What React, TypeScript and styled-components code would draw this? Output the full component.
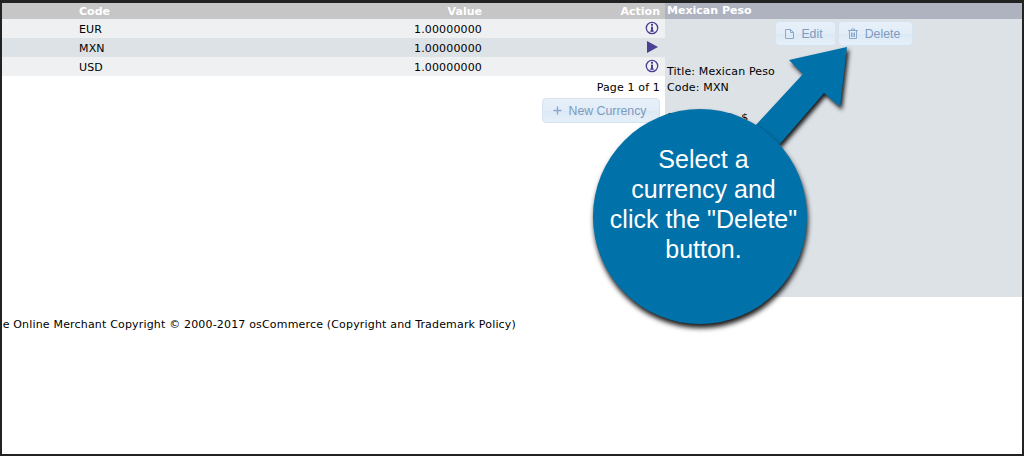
import React from "react";
import styled, { createGlobalStyle } from "styled-components";

const Global = createGlobalStyle`
  html, body { margin: 0; padding: 0; background: #fff; }
  * { box-sizing: border-box; }
`;

const Frame = styled.div`
  position: relative;
  width: 1024px;
  height: 456px;
  border: 2px solid #222;
  border-top-width: 3px;
  border-bottom-width: 2px;
  background: #fff;
  overflow: hidden;
  font-family: "DejaVu Sans", Verdana, sans-serif;
  font-size: 11px;
  letter-spacing: 0.15px;
  color: #000;
`;

const Columns = styled.div`
  display: grid;
  grid-template-columns: 663px 357px;
  height: 294px;
`;

const ListColumn = styled.div`
  display: flex;
  flex-direction: column;
`;

const Row = styled.div<{ $bg: string; $h: number; $head?: boolean }>`
  display: grid;
  grid-template-columns: 77px 1fr 178px;
  padding-right: 5px;
  padding-top: ${(p) => (p.$head ? 0 : 2)}px;
  align-items: center;
  height: ${(p) => p.$h}px;
  background: ${(p) => p.$bg};
  color: ${(p) => (p.$head ? "#fff" : "#000")};
  font-weight: ${(p) => (p.$head ? 700 : 400)};
  letter-spacing: ${(p) => (p.$head ? 0 : 0.15)}px;
`;

const Code = styled.span`
  padding-left: 77px;
  white-space: nowrap;
  grid-column: 1;
  grid-row: 1;
`;

const Value = styled.span`
  grid-column: 2;
  grid-row: 1;
  text-align: right;
`;

const Action = styled.span`
  grid-column: 3;
  grid-row: 1;
  display: flex;
  justify-content: flex-end;
  align-items: center;
`;

const IconSlot = styled.span`
  display: flex;
  margin-top: -3px;
  margin-right: 1px;
`;

const Pager = styled.div`
  margin-top: 5px;
  padding-right: 5px;
  text-align: right;
  line-height: 14px;
`;

const ButtonRow = styled.div<{ $justify: string; $pad: string }>`
  display: flex;
  gap: 2px;
  justify-content: ${(p) => p.$justify};
  padding: ${(p) => p.$pad};
`;

const Btn = styled.div<{ $w: number }>`
  display: flex;
  align-items: center;
  justify-content: center;
  gap: 7px;
  width: ${(p) => p.$w}px;
  height: 25px;
  padding-right: 3px;
  border: 1px solid #d5e3f1;
  border-radius: 4px;
  background: linear-gradient(#e7f0f9 0%, #e2edf8 50%, #dbe8f5 51%, #e6f0f9 100%);
  color: #7b9bbf;
  font-family: "Liberation Sans", Arial, sans-serif;
  font-size: 12.3px;
  letter-spacing: 0;
`;

const Side = styled.div`
  background: #dde2e7;
  display: flex;
  flex-direction: column;
`;

const SideHead = styled.div`
  height: 16px;
  background: #aeb3bf;
  color: #fff;
  font-weight: 700;
  letter-spacing: 0;
  padding-left: 2px;
  line-height: 16px;
`;

const Info = styled.div<{ $mt: number }>`
  margin-top: ${(p) => p.$mt}px;
  padding-left: 2px;
  line-height: 16px;
`;

const Footer = styled.div`
  margin-top: 21px;
  width: 514px;
  display: flex;
  justify-content: flex-end;
  white-space: nowrap;
  line-height: 14px;
  letter-spacing: 0.175px;
`;

const Arrow = styled.svg`
  position: absolute;
  left: 0;
  top: 0;
  overflow: visible;
  filter: drop-shadow(2px 3px 2px rgba(0, 0, 0, 0.9));
`;

const Bubble = styled.div`
  position: absolute;
  left: 591px;
  top: 106px;
  width: 214px;
  height: 215px;
  border-radius: 50%;
  background: #0071a9;
  box-shadow: 1px 4px 5px rgba(0, 0, 0, 0.9);
  color: #fff;
  font-family: "Liberation Sans", Arial, sans-serif;
  font-size: 25px;
  letter-spacing: 0;
  line-height: 30px;
  text-align: center;
  display: flex;
  align-items: center;
  justify-content: center;
  padding: 0 0 26px 7px;
`;

const InfoIcon = () => (
  <svg width="14" height="14" viewBox="0 0 14 14" fill="none">
    <circle cx="7" cy="7" r="5.7" stroke="#4b3f94" strokeWidth="1.3" />
    <rect x="6" y="5.6" width="2" height="5" fill="#4b3f94" />
    <rect x="6" y="2.9" width="2" height="1.8" fill="#4b3f94" />
    <rect x="4.9" y="9.7" width="4.2" height="0.9" fill="#4b3f94" />
  </svg>
);

const PlayIcon = () => (
  <svg width="13" height="12" viewBox="0 0 13 12">
    <path d="M1 0 L12 6 L1 12 Z" fill="#4b3f94" />
  </svg>
);

const DocIcon = () => (
  <svg width="9" height="10" viewBox="0 0 9 10" fill="none" stroke="#8aa9ca">
    <path d="M0.5 0.5 H5.5 L8.5 3.5 V9.5 H0.5 Z M5.5 0.5 V3.5 H8.5" />
  </svg>
);

const TrashIcon = () => (
  <svg width="10" height="11" viewBox="0 0 10 11" fill="none" stroke="#8aa9ca">
    <path d="M0 2.5 H10 M3.5 2.5 V1 H6.5 V2.5 M1.5 2.5 V10.5 H8.5 V2.5 M3.5 4.5 V9 M5 4.5 V9 M6.5 4.5 V9" />
  </svg>
);

const PlusIcon = () => (
  <svg width="9" height="9" viewBox="0 0 9 9" stroke="#8aa9ca" strokeWidth="1.4">
    <path d="M4.5 0.5 V8.5 M0.5 4.5 H8.5" />
  </svg>
);

const rows = [
  { code: "EUR", bg: "#eff0f1", icon: <InfoIcon /> },
  { code: "MXN", bg: "#dde2e7", icon: <PlayIcon /> },
  { code: "USD", bg: "#eff0f1", icon: <InfoIcon /> },
];

export default function App() {
  return (
    <Frame>
      <Global />
      <Columns>
        <ListColumn>
          <Row $bg="#c6c6c6" $h={16} $head>
            <Code>Code</Code>
            <Value>Value</Value>
            <Action>Action</Action>
          </Row>
          {rows.map((r) => (
            <Row key={r.code} $bg={r.bg} $h={19}>
              <Code>{r.code}</Code>
              <Value>1.00000000</Value>
              <Action>
                <IconSlot>{r.icon}</IconSlot>
              </Action>
            </Row>
          ))}
          <Pager>Page 1 of 1</Pager>
          <ButtonRow $justify="flex-end" $pad="3px 5px 0 0">
            <Btn $w={118}>
              <PlusIcon />
              New Currency
            </Btn>
          </ButtonRow>
        </ListColumn>
        <Side>
          <SideHead>Mexican Peso</SideHead>
          <ButtonRow $justify="flex-start" $pad="2px 0 0 110px">
            <Btn $w={61}>
              <DocIcon />
              Edit
            </Btn>
            <Btn $w={75}>
              <TrashIcon />
              Delete
            </Btn>
          </ButtonRow>
          <Info $mt={18}>Title: Mexican Peso</Info>
          <Info $mt={0}>Code: MXN</Info>
          <Info $mt={14}>Symbol Left: $</Info>
        </Side>
      </Columns>
      <Footer>e Online Merchant Copyright © 2000-2017 osCommerce (Copyright and Trademark Policy)</Footer>
      <Arrow width="1020" height="451" viewBox="2 3 1020 451">
        <path d="M847 47 L789 60 L803 74 L755 126 L779 145 L824 93 L840 107 Z" fill="#0071a9" />
      </Arrow>
      <Bubble>
        <span>
          Select a
          <br />
          currency and
          <br />
          click the "Delete"
          <br />
          button.
        </span>
      </Bubble>
    </Frame>
  );
}
